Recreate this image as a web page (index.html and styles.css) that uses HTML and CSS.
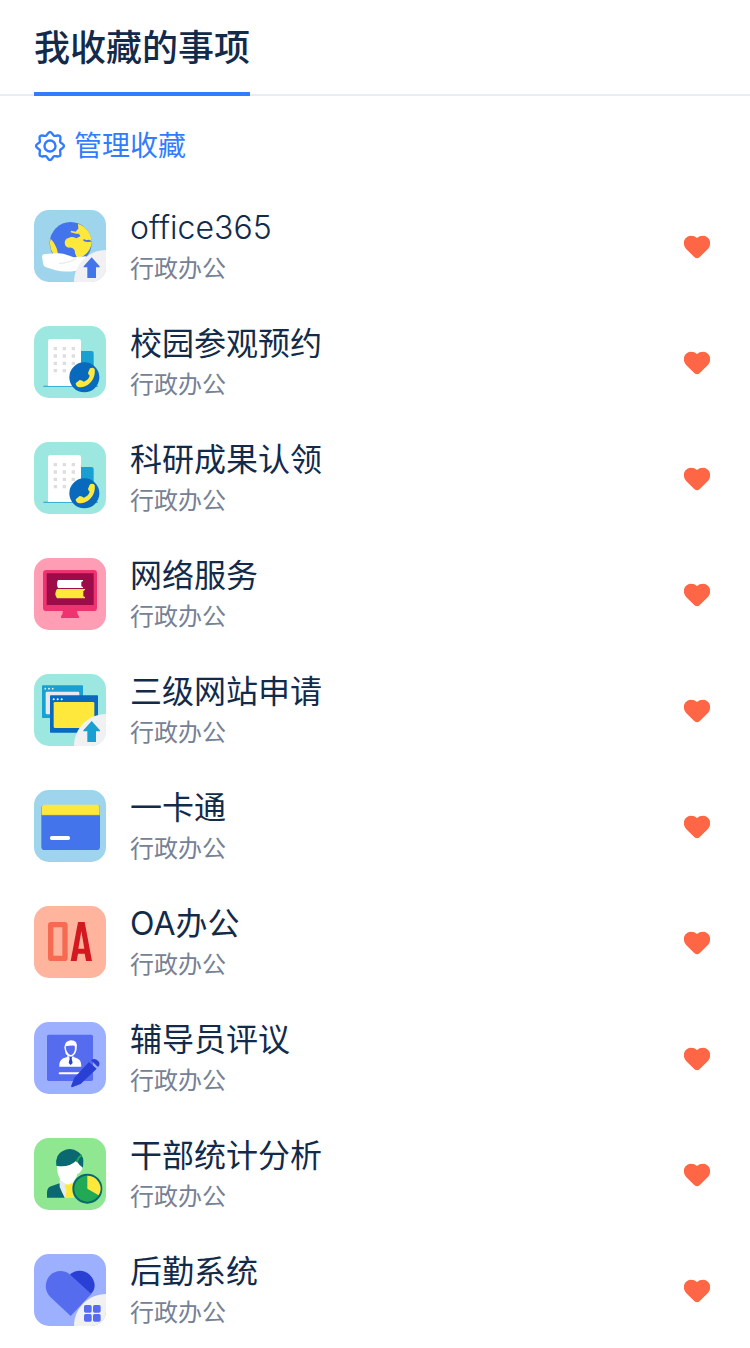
FILE: index.html
```html
<!DOCTYPE html>
<html lang="zh-CN">
<head>
<meta charset="utf-8">
<meta name="viewport" content="width=device-width, initial-scale=1">
<title>我收藏的事项</title>
<link rel="stylesheet" href="styles.css">
</head>
<body>
<svg class="defs" aria-hidden="true">
  <symbol id="heart" viewBox="0 0 78 70"><path d="M39 69Q35 69 30 64L7 42C-9 23 3 1 21 1Q32 1 39 8Q46 1 57 1C75 1 87 23 71 42L48 64Q43 69 39 69Z"/></symbol>
  <symbol id="campus" viewBox="12 18 216 216">
    <path fill="#18a0d2" d="M152 93h33q6 0 6 6v99h-39zM40 197h164v3H40z"/>
    <path fill="#fff" d="M54 198V64q0-7 7-7h85q7 0 7 7v134z"/>
    <path fill="#dedede" d="M71 81h10v10H71zm27 0h10v10H98zm27 0h10v10h-10zM71 103h10v10H71zm27 0h10v10H98zm27 0h10v10h-10zM71 125h10v10H71zm27 0h10v10H98zm27 0h10v10h-10zM71 147h10v10H71zm27 0h10v10H98zm27 0h10v10h-10z"/>
    <circle cx="163" cy="172" r="45" fill="#0869bd"/>
    <path fill="#ffe83c" d="M180 145q8-5 14 2c4 27-15 55-47 55q-9-2-10-12l12-10q8 1 12 5c9-3 16-10 18-18q-5-4-5-9z"/>
  </symbol>
</svg>
<header class="tabs"><h1 class="tab">我收藏的事项</h1></header>
<main>
  <div class="toolbar">
    <button class="manage" type="button">
      <svg class="gear" viewBox="-1 -1 32 32" aria-hidden="true"><g fill="none" stroke="currentColor" stroke-width="2.400" stroke-linejoin="round"><path d="M15 1C17 1 17.400 4 19 4.800C21 5.400 23 3.600 24.900 5.100C26.400 7 24.600 9 25.200 11C26 12.600 29 13 29 15C29 17 26 17.400 25.200 19C24.600 21 26.400 23 24.900 24.900C23 26.400 21 24.600 19 25.200C17.400 26 17 29 15 29C13 29 12.600 26 11 25.200C9 24.600 7 26.400 5.100 24.900C3.600 23 5.400 21 4.800 19C4 17.400 1 17 1 15C1 13 4 12.600 4.800 11C5.400 9 3.600 7 5.100 5.100C7 3.600 9 5.400 11 4.800C12.600 4 13 1 15 1Z"/><circle cx="15" cy="15" r="5.500"/></g></svg>
      <span>管理收藏</span>
    </button>
  </div>
  <ul class="list">
    <li class="item">
      <svg class="icon blue" viewBox="12 18 216 216" aria-hidden="true">
        <circle cx="122" cy="117" r="63" fill="#4374ec"/>
        <path fill="#ffe83c" d="M144 59C168 67 184 89 185 112Q176 105 170 109L161 105l-1 6 11 3 14-1C185 133 171 151 154 159H140l-5-11q1-8-4-13-5-6-15-4c-15-2-14-21-6-27l13-5q9 0 16 4l12-6-4-8h-9l-16-4 1-5 14 3q6-7 8-9zM62 104Q77 120 82 140l2 10H70Q55 128 62 104z"/>
        <path fill="#fff" d="M36 157q1-7 9-7l36-2q17-1 33 6l17 6q22-2 37-3v30l-29 13q-36 6-62-1l-29-9q-8-3-9-12z"/>
        <path d="M87 178q28 0 52-14" fill="none" stroke="#ececec" stroke-width="4"/>
        <path fill="#f1f1f3" d="M132 234c0-53 43-96 96-96v96z"/>
        <path fill="#4374ec" d="M185 160l24 27v3h-11v32h-26v-32h-11v-3z"/>
      </svg>
      <div class="text"><h2 class="name latin">office365</h2><p class="kind">行政办公</p></div>
      <button class="fav" type="button" aria-label="取消收藏 office365"><svg viewBox="0 0 78 70"><use href="#heart"/></svg></button>
    </li>
    <li class="item">
      <svg class="icon mint" viewBox="12 18 216 216" aria-hidden="true"><use href="#campus" x="12" y="18" width="216" height="216"/></svg>
      <div class="text"><h2 class="name">校园参观预约</h2><p class="kind">行政办公</p></div>
      <button class="fav" type="button" aria-label="取消收藏 校园参观预约"><svg viewBox="0 0 78 70"><use href="#heart"/></svg></button>
    </li>
    <li class="item">
      <svg class="icon mint" viewBox="12 18 216 216" aria-hidden="true"><use href="#campus" x="12" y="18" width="216" height="216"/></svg>
      <div class="text"><h2 class="name">科研成果认领</h2><p class="kind">行政办公</p></div>
      <button class="fav" type="button" aria-label="取消收藏 科研成果认领"><svg viewBox="0 0 78 70"><use href="#heart"/></svg></button>
    </li>
    <li class="item">
      <svg class="icon pink" viewBox="12 18 216 216" aria-hidden="true">
        <rect x="39" y="54" width="162" height="123" rx="10" fill="#ee3370"/>
        <path fill="#ee3370" d="M99 176h42l2 11q5 5 4 11H93q0-7 4-11z"/>
        <path fill="#9e0b49" d="M50 64h141v95H50z"/>
        <path fill="#fff" d="M84 84h75v3l-5 3v13l5 2v3H84q-6-12 0-24z"/>
        <path fill="#ffe83c" d="M81 111h84v3l-5 3v16l5 2v4H81q-10-14 0-28z"/>
      </svg>
      <div class="text"><h2 class="name">网络服务</h2><p class="kind">行政办公</p></div>
      <button class="fav" type="button" aria-label="取消收藏 网络服务"><svg viewBox="0 0 78 70"><use href="#heart"/></svg></button>
    </li>
    <li class="item">
      <svg class="icon mint" viewBox="12 18 216 216" aria-hidden="true">
        <rect x="36" y="52" width="123" height="98" rx="2" fill="#18a0d2"/>
        <rect x="47" y="71" width="101" height="68" rx="4" fill="#e9e9ed"/>
        <path d="M46 62h.1M57 62h.1M68 62h.1" stroke="#fff" stroke-width="5" stroke-linecap="round"/>
        <rect x="60" y="82" width="144" height="112" rx="2" fill="#0869bd"/>
        <rect x="71" y="102" width="122" height="78" rx="4" fill="#ffe83c"/>
        <path d="M71 94h.1M83 94h.1M95 94h.1" stroke="#fff" stroke-width="6" stroke-linecap="round"/>
        <path fill="#f1f1f3" d="M132 234c0-53 43-96 96-96v96z"/>
        <path fill="#18a0d2" d="M185 159l25 28v3h-12v32h-26v-32h-12v-3z"/>
      </svg>
      <div class="text"><h2 class="name">三级网站申请</h2><p class="kind">行政办公</p></div>
      <button class="fav" type="button" aria-label="取消收藏 三级网站申请"><svg viewBox="0 0 78 70"><use href="#heart"/></svg></button>
    </li>
    <li class="item">
      <svg class="icon blue" viewBox="12 18 216 216" aria-hidden="true">
        <rect x="34" y="63" width="176" height="135" rx="10" fill="#4374ec"/>
        <path fill="#ffe83c" d="M35 93V71q0-9 9-9h155q10 0 10 9v22z"/>
        <path d="M34 94h176" stroke="#98985f" stroke-width="2"/>
        <rect x="60" y="156" width="60" height="12" rx="5" fill="#fff"/>
      </svg>
      <div class="text"><h2 class="name">一卡通</h2><p class="kind">行政办公</p></div>
      <button class="fav" type="button" aria-label="取消收藏 一卡通"><svg viewBox="0 0 78 70"><use href="#heart"/></svg></button>
    </li>
    <li class="item">
      <svg class="icon peach" viewBox="12 18 216 216" aria-hidden="true">
        <rect x="62" y="74" width="43" height="101" rx="2" fill="none" stroke="#f56a51" stroke-width="16"/>
        <path fill="#d31820" fill-rule="evenodd" d="M144 66h20l22 117h-18l-4-22h-20l-4 22h-18zM154 94l-9 52h18z"/>
      </svg>
      <div class="text"><h2 class="name">OA办公</h2><p class="kind">行政办公</p></div>
      <button class="fav" type="button" aria-label="取消收藏 OA办公"><svg viewBox="0 0 78 70"><use href="#heart"/></svg></button>
    </li>
    <li class="item">
      <svg class="icon violet" viewBox="12 18 216 216" aria-hidden="true">
        <rect x="51" y="56" width="138" height="139" rx="5" fill="#566cee"/>
        <path fill="#fff" d="M105 104q-7-27 16-31 24-1 19 25-1 14-11 21l2 4c18 5 23 12 23 29H88c0-18 5-24 23-29l2-4q-8-6-8-15z"/>
        <path fill="#566cee" d="M107 91q14-3 27-2 3 16-5 24-7 8-15-1-7-7-7-21zM115 119q6 5 14 0l-2 4h-10z"/>
        <path fill="#2a3fd4" d="M118 123h8l-1 5 3 13-6 6-6-6 3-13z"/>
        <path d="M89 172h61" stroke="#fff" stroke-width="6" stroke-linecap="round"/>
        <path fill="#2a3fd4" d="M177 138l23 20-48 46-24 9q-7 2-4-5l9-23zM183 133q10-9 21 1 9 9 0 19z"/>
      </svg>
      <div class="text"><h2 class="name">辅导员评议</h2><p class="kind">行政办公</p></div>
      <button class="fav" type="button" aria-label="取消收藏 辅导员评议"><svg viewBox="0 0 78 70"><use href="#heart"/></svg></button>
    </li>
    <li class="item">
      <svg class="icon green" viewBox="12 18 216 216" aria-hidden="true">
        <path fill="#0a6870" d="M51 197v-17q1-13 12-17l26-9 15 43z"/>
        <path fill="#e5ecef" d="M89 142h42v20l-26 36-9-17-7-17z"/>
        <path fill="#ffe83c" d="M112 154h20v44h-27l4-24-5-12z"/>
        <path fill="#fff" d="M81 100q35 2 60-18l17 25q-5 15-16 19-5 22-24 31-10 2-26-13-12-17-11-44z"/>
        <path fill="#0a6870" d="M79 101q-4-33 18-43 25-15 48 2 16 12 15 28l-1 19q-13-9-20-21-24 22-60 15z"/>
        <path d="M140 90q4-14 15-21" fill="none" stroke="#22a955" stroke-width="5"/>
        <circle cx="172" cy="170" r="42" fill="#22a955" stroke="#0a6870" stroke-width="6"/>
        <path fill="#ffe83c" d="M172 131a39 39 0 0 1 34 59l-34-20z"/>
      </svg>
      <div class="text"><h2 class="name">干部统计分析</h2><p class="kind">行政办公</p></div>
      <button class="fav" type="button" aria-label="取消收藏 干部统计分析"><svg viewBox="0 0 78 70"><use href="#heart"/></svg></button>
    </li>
    <li class="item">
      <svg class="icon violet" viewBox="12 18 216 216" aria-hidden="true">
        <path fill="#2a3fd4" d="M118 82c17-19 45-17 61-2s20 38 8 53l-5 6z"/>
        <path fill="#566cee" d="M59 83c16-16 42-19 60-4l65 59-62 66-61-57C43 130 43 101 59 83z"/>
        <path fill="#f1f1f3" d="M132 234c0-53 43-96 96-96v96z"/>
        <g fill="#566cee"><rect x="162" y="171" width="23" height="23" rx="5"/><rect x="189" y="171" width="23" height="23" rx="5"/><rect x="162" y="198" width="23" height="23" rx="5"/><rect x="189" y="198" width="23" height="23" rx="5"/></g>
      </svg>
      <div class="text"><h2 class="name">后勤系统</h2><p class="kind">行政办公</p></div>
      <button class="fav" type="button" aria-label="取消收藏 后勤系统"><svg viewBox="0 0 78 70"><use href="#heart"/></svg></button>
    </li>
  </ul>
</main>
</body>
</html>
```
FILE: styles.css
```css
* {
  box-sizing: border-box;
  margin: 0;
  padding: 0;
}

body {
  background: #fff;
  color: #122b4a;
  font-family: Inter, "Noto Sans CJK SC", sans-serif;
}

button {
  border: 0;
  background: none;
  font: inherit;
  cursor: pointer;
}

.defs {
  position: absolute;
  width: 0;
  height: 0;
}

.tabs {
  display: flex;
  height: 96px;
  padding: 0 34px;
  box-shadow: inset 0 -2px #e8edf2;
}

.tab {
  padding-top: 4px;
  border-bottom: 4px solid #327dff;
  font-size: 36px;
  font-weight: 500;
  line-height: 88px;
}

.toolbar {
  display: flex;
  height: 92px;
  padding: 8px 34px 0;
}

.manage {
  display: flex;
  align-items: center;
  gap: 8px;
  color: #327dff;
  font-size: 28px;
  line-height: 40px;
}

.gear {
  width: 32px;
  height: 32px;
}

.list {
  list-style: none;
}

.item {
  display: flex;
  align-items: center;
  height: 116px;
  padding: 0 34px;
}

.icon {
  flex: none;
  width: 72px;
  height: 72px;
  margin-right: 24px;
  border-radius: 15px;
}

.blue { background: #9ed5ec; }
.mint { background: #9ce8e1; }
.pink { background: #ff9db5; }
.peach { background: #ffb49e; }
.violet { background: #9cb0ff; }
.green { background: #90e792; }

.text {
  flex: 1;
  min-width: 0;
  padding-top: 2px;
}

.name {
  font-size: 32px;
  font-weight: 400;
  line-height: 44px;
}

.latin {
  font-weight: 300;
}

.kind {
  color: #758195;
  font-size: 24px;
  line-height: 38px;
}

.fav {
  display: flex;
  padding: 7px 6px 6px;
  color: #ff6645;
}

.fav svg {
  width: 26px;
  height: 24px;
  fill: currentColor;
}
```
